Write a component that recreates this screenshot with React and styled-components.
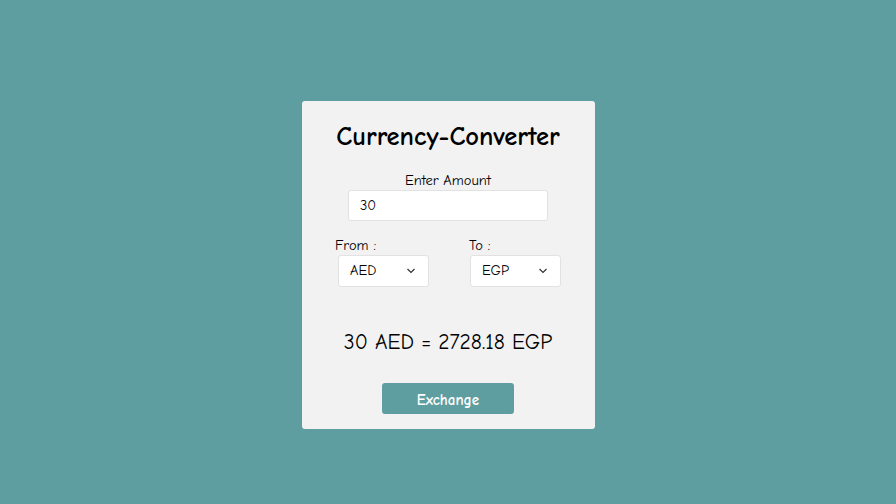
import React, { useState } from 'react';
import styled, { createGlobalStyle } from 'styled-components';

const GlobalStyle = createGlobalStyle`
  * { box-sizing: border-box; }
  body {
    margin: 0;
    background: #5f9ea0;
    font-family: "Comic Sans MS", "Comic Neue", "DejaVu Sans", sans-serif;
  }
`;

const Page = styled.main`
  min-height: 504px;
  display: flex;
  justify-content: center;
  align-items: flex-start;
  padding-top: 101px;
`;

const Card = styled.div`
  width: 293px;
  height: 328px;
  background: #f2f2f2;
  border-radius: 3px;
  display: flex;
  flex-direction: column;
  align-items: center;
  padding: 0 0 15px;
`;

const Title = styled.h1`
  margin: 21px 0 0;
  font-size: 26.5px;
  line-height: 30px;
  font-weight: bold;
  color: #000;
`;

const Label = styled.label`
  display: block;
  font-size: 14.5px;
  line-height: 18px;
  color: #000;
  margin-top: ${(p) => p.$top || 0}px;
  padding-left: ${(p) => p.$indent || 0}px;
`;

const AmountInput = styled.input`
  margin-top: 0;
  width: 200px;
  height: 31px;
  border: 1px solid #e2e2e2;
  border-radius: 3px;
  background: #fff;
  padding: 0 11px;
  font-family: inherit;
  font-size: 14.5px;
  color: #000;
  outline: none;
`;

const SelectRow = styled.div`
  margin-top: 16px;
  width: 226px;
  display: flex;
  justify-content: space-between;
`;

const SelectGroup = styled.div`
  width: 93px;
  display: flex;
  flex-direction: column;
`;

const SelectBox = styled.div`
  position: relative;
  margin: 0 0 0 ${(p) => p.$shift}px;
  width: 91px;
  height: 32px;
`;

const Select = styled.select`
  appearance: none;
  width: 100%;
  height: 100%;
  border: 1px solid #e2e2e2;
  border-radius: 3px;
  background: #fff;
  padding: 0 11px;
  font-family: inherit;
  font-size: 14.5px;
  color: #000;
  outline: none;
`;

const Chevron = styled.svg`
  position: absolute;
  right: 13px;
  top: 12px;
  width: 10px;
  height: 8px;
  pointer-events: none;
`;

const Result = styled.p`
  margin: 42px 0 0;
  font-size: 21.5px;
  line-height: 26px;
  color: #000;
`;

const ExchangeBtn = styled.button`
  margin-top: 28px;
  width: 132px;
  height: 32px;
  padding: 3px 0 0;
  border: none;
  border-radius: 3px;
  background: #5f9ea0;
  color: #fff;
  font-family: inherit;
  font-size: 15px;
  font-weight: bold;
  cursor: pointer;
`;

const currencies = ['AED', 'EGP', 'USD', 'EUR', 'GBP'];

const CurrencySelect = ({ label, value, onChange, shift, indent }) => (
  <SelectGroup>
    <Label $indent={indent}>{label}</Label>
    <SelectBox $shift={shift}>
      <Select value={value} onChange={(e) => onChange(e.target.value)}>
        {currencies.map((c) => (
          <option key={c} value={c}>{c}</option>
        ))}
      </Select>
      <Chevron viewBox="0 0 10 8">
        <path d="M1.5 2 L5 5.5 L8.5 2" fill="none" stroke="#333" strokeWidth="1.2" />
      </Chevron>
    </SelectBox>
  </SelectGroup>
);

const App = () => {
  const [amount, setAmount] = useState('30');
  const [from, setFrom] = useState('AED');
  const [to, setTo] = useState('EGP');

  return (
    <Page>
      <GlobalStyle />
      <Card>
        <Title>Currency-Converter</Title>
        <Label $top={20}>Enter Amount</Label>
        <AmountInput value={amount} onChange={(e) => setAmount(e.target.value)} />
        <SelectRow>
          <CurrencySelect label="From :" value={from} onChange={setFrom} shift={3} indent={0} />
          <CurrencySelect label="To :" value={to} onChange={setTo} shift={2} indent={1} />
        </SelectRow>
        <Result>{amount} {from} = 2728.18 {to}</Result>
        <ExchangeBtn>Exchange</ExchangeBtn>
      </Card>
    </Page>
  );
};

export default App;
